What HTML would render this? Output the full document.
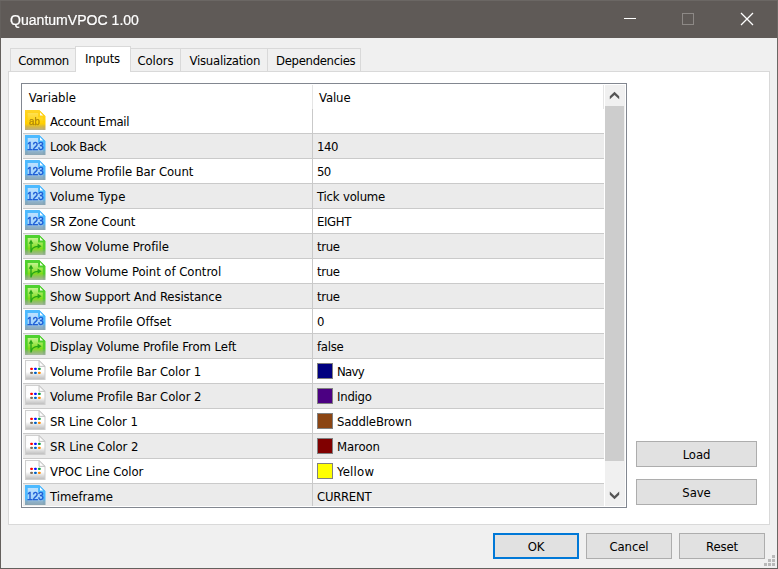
<!DOCTYPE html><html><head><meta charset="utf-8"><title>QuantumVPOC 1.00</title><style>
html,body{margin:0;padding:0}
body{width:778px;height:569px;overflow:hidden;background:#f0f0f0;position:relative;font-family:"DejaVu Sans Condensed","DejaVu Sans","Liberation Sans",sans-serif;font-size:13px;font-stretch:condensed;color:#000;letter-spacing:-0.1px}
div,span{box-sizing:border-box}
.abs{position:absolute}
#title{left:0;top:0;width:778px;height:38px;background:#5f5a57}
#title .cap{position:absolute;left:10px;top:10px;font-family:"Liberation Sans",sans-serif;font-size:15.5px;line-height:20px;color:#fff;letter-spacing:0;white-space:nowrap;display:inline-block;transform:scaleX(.907);transform-origin:0 0;-webkit-text-stroke:.22px #fff}
#bl{left:0;top:0;width:1px;height:569px;background:#64605d;z-index:9}
#br{left:777px;top:0;width:1px;height:569px;background:#6b6764;z-index:9}
#bb{left:0;top:568px;width:778px;height:1px;background:#64605d;z-index:9}
#bt{left:0;top:0;width:778px;height:1px;background:#6b6764;z-index:9}
.tab{position:absolute;top:48px;height:24px;border:1px solid #d9d9d9;border-bottom:none;background:#f0f0f0;text-align:center;line-height:23px;white-space:nowrap}
.tab.sel{top:46px;height:26px;background:#fff;line-height:23px;z-index:3}
#panel{left:8px;top:71px;width:762px;height:454px;background:#fff;border:1px solid #d9d9d9;z-index:1}
#list{left:21px;top:83px;width:606px;height:425px;border:1px solid #828790;background:#fff;z-index:2;overflow:hidden}
.row{position:absolute;left:1px;width:581px;height:25px;border-bottom:1px solid #cacaca;white-space:nowrap}
.row.g{background:#ebebeb}
.row .ic{position:absolute;left:2px;top:1px}
.row .n{position:absolute;left:27px;top:1px;line-height:24px}
.row .v{position:absolute;left:294px;top:1px;line-height:24px}
.row .sw{position:absolute;left:294px;top:4px;width:16px;height:16px;border:1px solid #808080}
.row .v.c{left:314px}
#coldiv{left:290px;top:25px;width:1px;height:400px;background:#c9c9c9;z-index:3}
.hd{position:absolute;top:2px;line-height:24px}
.btn{position:absolute;height:26px;border:1px solid #adadad;background:#e1e1e1;text-align:center;line-height:25px;z-index:2}
.btn.def{border:2px solid #0078d7;line-height:23px}
</style></head><body>
<div id="title" class="abs"><span class="cap">QuantumVPOC 1.00</span><svg class="abs" style="left:618px;top:8px" width="150" height="24" viewBox="0 0 150 24"><path d="M6 10.5 H18" stroke="#fff" stroke-width="1"/><rect x="64.5" y="5.5" width="11" height="11" fill="none" stroke="#8d8986" stroke-width="1"/><path d="M123 5 L135 17 M135 5 L123 17" stroke="#fff" stroke-width="1.3"/></svg></div>
<div id="bl" class="abs"></div><div id="br" class="abs"></div><div id="bb" class="abs"></div><div id="bt" class="abs"></div>
<div class="tab" style="left:10px;width:66px"><span style="position:relative;left:0.5px;letter-spacing:-0.36px">Common</span></div>
<div class="tab sel" style="left:75px;width:56px"><span style="position:relative;left:-0.5px;letter-spacing:-0.26px">Inputs</span></div>
<div class="tab" style="left:130px;width:51px"><span style="position:relative;left:0px;letter-spacing:-0.1px">Colors</span></div>
<div class="tab" style="left:180px;width:88px"><span style="position:relative;left:0.8px;letter-spacing:-0.25px">Visualization</span></div>
<div class="tab" style="left:267px;width:94px"><span style="position:relative;left:1.7px;letter-spacing:-0.34px">Dependencies</span></div>
<div id="panel" class="abs"></div>
<div id="list" class="abs">
<span class="hd" style="left:6.7px;letter-spacing:0">Variable</span><span class="hd" style="left:297px">Value</span>
<div class="abs" style="left:290px;top:1px;width:1px;height:24px;background:#e5e5e5"></div>
<div class="abs" style="left:581px;top:1px;width:1px;height:24px;background:#e5e5e5"></div>
<div class="row" style="top:25px"><svg class="ic" width="21" height="20" viewBox="0 0 21 20"><defs><filter id="b0" x="-10%" y="-10%" width="120%" height="120%"><feGaussianBlur stdDeviation="0.45"/></filter><linearGradient id="g0" x1="0" y1="0" x2="0" y2="1"><stop offset="0" stop-color="#ffd426"/><stop offset=".68" stop-color="#ffcf00"/><stop offset=".82" stop-color="#d6b640"/><stop offset="1" stop-color="#b9ab82"/></linearGradient><linearGradient id="i0" x1="0" y1="0" x2="0" y2="1"><stop offset="0" stop-color="#ffe052"/><stop offset=".62" stop-color="#ffd000"/><stop offset=".8" stop-color="#d8b93e"/><stop offset="1" stop-color="#bdb088"/></linearGradient></defs><g filter="url(#b0)"><path d="M0 0 H14.2 L20.5 6.2 V20 H0 Z" fill="url(#g0)"/><path d="M2.7 3 H13 V7.6 H17.8 V20 H2.7 Z" fill="url(#i0)"/><path d="M14.2 0 V6.2 H20.5 Z" fill="#ffd21a"/><path d="M15 2.2 V5.4 H18.2 Z" fill="#fffdf0"/></g><text x="9.4" y="15" font-family="Liberation Sans, sans-serif" font-size="10.5" text-anchor="middle" textLength="10.6" lengthAdjust="spacingAndGlyphs" fill="#ae860a" stroke="#ae860a" stroke-width=".25" filter="url(#b0)">ab</text></svg><span class="n" style="letter-spacing:-0.32px">Account Email</span><span class="v" style="letter-spacing:-0.1px"></span></div>
<div class="row g" style="top:50px"><svg class="ic" width="21" height="20" viewBox="0 0 21 20"><defs><filter id="b1" x="-10%" y="-10%" width="120%" height="120%"><feGaussianBlur stdDeviation="0.45"/></filter><linearGradient id="g1" x1="0" y1="0" x2="0" y2="1"><stop offset="0" stop-color="#4dbaff"/><stop offset=".68" stop-color="#50b8fd"/><stop offset=".82" stop-color="#7fabc6"/><stop offset="1" stop-color="#8aa3b0"/></linearGradient><linearGradient id="i1" x1="0" y1="0" x2="0" y2="1"><stop offset="0" stop-color="#bde1ff"/><stop offset=".62" stop-color="#a2d3fb"/><stop offset=".8" stop-color="#8fb2cb"/><stop offset="1" stop-color="#8ba5b3"/></linearGradient></defs><g filter="url(#b1)"><path d="M0 0 H14.2 L20.5 6.2 V20 H0 Z" fill="url(#g1)"/><path d="M2.7 3 H13 V7.6 H17.8 V20 H2.7 Z" fill="url(#i1)"/><path d="M14.2 0 V6.2 H20.5 Z" fill="#46b6ff"/><path d="M15 2.2 V5.4 H18.2 Z" fill="#ffffff"/></g><text x="10.3" y="15" font-family="Liberation Sans, sans-serif" font-size="11.6" text-anchor="middle" textLength="16.8" lengthAdjust="spacingAndGlyphs" fill="#1a5ad4" stroke="#1a5ad4" stroke-width=".45" filter="url(#b1)">123</text></svg><span class="n" style="letter-spacing:-0.36px">Look Back</span><span class="v" style="letter-spacing:-0.45px">140</span></div>
<div class="row" style="top:75px"><svg class="ic" width="21" height="20" viewBox="0 0 21 20"><defs><filter id="b2" x="-10%" y="-10%" width="120%" height="120%"><feGaussianBlur stdDeviation="0.45"/></filter><linearGradient id="g2" x1="0" y1="0" x2="0" y2="1"><stop offset="0" stop-color="#4dbaff"/><stop offset=".68" stop-color="#50b8fd"/><stop offset=".82" stop-color="#7fabc6"/><stop offset="1" stop-color="#8aa3b0"/></linearGradient><linearGradient id="i2" x1="0" y1="0" x2="0" y2="1"><stop offset="0" stop-color="#bde1ff"/><stop offset=".62" stop-color="#a2d3fb"/><stop offset=".8" stop-color="#8fb2cb"/><stop offset="1" stop-color="#8ba5b3"/></linearGradient></defs><g filter="url(#b2)"><path d="M0 0 H14.2 L20.5 6.2 V20 H0 Z" fill="url(#g2)"/><path d="M2.7 3 H13 V7.6 H17.8 V20 H2.7 Z" fill="url(#i2)"/><path d="M14.2 0 V6.2 H20.5 Z" fill="#46b6ff"/><path d="M15 2.2 V5.4 H18.2 Z" fill="#ffffff"/></g><text x="10.3" y="15" font-family="Liberation Sans, sans-serif" font-size="11.6" text-anchor="middle" textLength="16.8" lengthAdjust="spacingAndGlyphs" fill="#1a5ad4" stroke="#1a5ad4" stroke-width=".45" filter="url(#b2)">123</text></svg><span class="n" style="letter-spacing:-0.1px">Volume Profile Bar Count</span><span class="v" style="letter-spacing:-0.6px">50</span></div>
<div class="row g" style="top:100px"><svg class="ic" width="21" height="20" viewBox="0 0 21 20"><defs><filter id="b3" x="-10%" y="-10%" width="120%" height="120%"><feGaussianBlur stdDeviation="0.45"/></filter><linearGradient id="g3" x1="0" y1="0" x2="0" y2="1"><stop offset="0" stop-color="#4dbaff"/><stop offset=".68" stop-color="#50b8fd"/><stop offset=".82" stop-color="#7fabc6"/><stop offset="1" stop-color="#8aa3b0"/></linearGradient><linearGradient id="i3" x1="0" y1="0" x2="0" y2="1"><stop offset="0" stop-color="#bde1ff"/><stop offset=".62" stop-color="#a2d3fb"/><stop offset=".8" stop-color="#8fb2cb"/><stop offset="1" stop-color="#8ba5b3"/></linearGradient></defs><g filter="url(#b3)"><path d="M0 0 H14.2 L20.5 6.2 V20 H0 Z" fill="url(#g3)"/><path d="M2.7 3 H13 V7.6 H17.8 V20 H2.7 Z" fill="url(#i3)"/><path d="M14.2 0 V6.2 H20.5 Z" fill="#46b6ff"/><path d="M15 2.2 V5.4 H18.2 Z" fill="#ffffff"/></g><text x="10.3" y="15" font-family="Liberation Sans, sans-serif" font-size="11.6" text-anchor="middle" textLength="16.8" lengthAdjust="spacingAndGlyphs" fill="#1a5ad4" stroke="#1a5ad4" stroke-width=".45" filter="url(#b3)">123</text></svg><span class="n" style="letter-spacing:0.16px">Volume Type</span><span class="v" style="letter-spacing:-0.2px">Tick volume</span></div>
<div class="row" style="top:125px"><svg class="ic" width="21" height="20" viewBox="0 0 21 20"><defs><filter id="b4" x="-10%" y="-10%" width="120%" height="120%"><feGaussianBlur stdDeviation="0.45"/></filter><linearGradient id="g4" x1="0" y1="0" x2="0" y2="1"><stop offset="0" stop-color="#4dbaff"/><stop offset=".68" stop-color="#50b8fd"/><stop offset=".82" stop-color="#7fabc6"/><stop offset="1" stop-color="#8aa3b0"/></linearGradient><linearGradient id="i4" x1="0" y1="0" x2="0" y2="1"><stop offset="0" stop-color="#bde1ff"/><stop offset=".62" stop-color="#a2d3fb"/><stop offset=".8" stop-color="#8fb2cb"/><stop offset="1" stop-color="#8ba5b3"/></linearGradient></defs><g filter="url(#b4)"><path d="M0 0 H14.2 L20.5 6.2 V20 H0 Z" fill="url(#g4)"/><path d="M2.7 3 H13 V7.6 H17.8 V20 H2.7 Z" fill="url(#i4)"/><path d="M14.2 0 V6.2 H20.5 Z" fill="#46b6ff"/><path d="M15 2.2 V5.4 H18.2 Z" fill="#ffffff"/></g><text x="10.3" y="15" font-family="Liberation Sans, sans-serif" font-size="11.6" text-anchor="middle" textLength="16.8" lengthAdjust="spacingAndGlyphs" fill="#1a5ad4" stroke="#1a5ad4" stroke-width=".45" filter="url(#b4)">123</text></svg><span class="n" style="letter-spacing:-0.17px">SR Zone Count</span><span class="v" style="letter-spacing:-0.36px">EIGHT</span></div>
<div class="row g" style="top:150px"><svg class="ic" width="21" height="20" viewBox="0 0 21 20"><defs><filter id="b5" x="-10%" y="-10%" width="120%" height="120%"><feGaussianBlur stdDeviation="0.45"/></filter><linearGradient id="g5" x1="0" y1="0" x2="0" y2="1"><stop offset="0" stop-color="#50d230"/><stop offset=".68" stop-color="#52d028"/><stop offset=".82" stop-color="#7cb465"/><stop offset="1" stop-color="#9db09a"/></linearGradient><linearGradient id="i5" x1="0" y1="0" x2="0" y2="1"><stop offset="0" stop-color="#c4f490"/><stop offset=".62" stop-color="#80dc1c"/><stop offset=".8" stop-color="#8fc060"/><stop offset="1" stop-color="#a4b8a0"/></linearGradient></defs><g filter="url(#b5)"><path d="M0 0 H14.2 L20.5 6.2 V20 H0 Z" fill="url(#g5)"/><path d="M2.7 3 H13 V7.6 H17.8 V20 H2.7 Z" fill="url(#i5)"/><path d="M14.2 0 V6.2 H20.5 Z" fill="#48cc28"/><path d="M15 2.2 V5.4 H18.2 Z" fill="#f4ffe8"/></g><g filter="url(#b5)"><path d="M6 17.6 V8 M6.2 16.6 C6.6 13.4 8.6 11.5 13 11.3" stroke="#27a418" stroke-width="1.35" fill="none"/><path d="M3.7 8.7 L6 4.6 L8.3 8.7 Z M12.6 8.6 L16.6 11.2 L12.6 13.8 Z" fill="#27a418"/></g></svg><span class="n" style="letter-spacing:0.02px">Show Volume Profile</span><span class="v" style="letter-spacing:-0.33px">true</span></div>
<div class="row" style="top:175px"><svg class="ic" width="21" height="20" viewBox="0 0 21 20"><defs><filter id="b6" x="-10%" y="-10%" width="120%" height="120%"><feGaussianBlur stdDeviation="0.45"/></filter><linearGradient id="g6" x1="0" y1="0" x2="0" y2="1"><stop offset="0" stop-color="#50d230"/><stop offset=".68" stop-color="#52d028"/><stop offset=".82" stop-color="#7cb465"/><stop offset="1" stop-color="#9db09a"/></linearGradient><linearGradient id="i6" x1="0" y1="0" x2="0" y2="1"><stop offset="0" stop-color="#c4f490"/><stop offset=".62" stop-color="#80dc1c"/><stop offset=".8" stop-color="#8fc060"/><stop offset="1" stop-color="#a4b8a0"/></linearGradient></defs><g filter="url(#b6)"><path d="M0 0 H14.2 L20.5 6.2 V20 H0 Z" fill="url(#g6)"/><path d="M2.7 3 H13 V7.6 H17.8 V20 H2.7 Z" fill="url(#i6)"/><path d="M14.2 0 V6.2 H20.5 Z" fill="#48cc28"/><path d="M15 2.2 V5.4 H18.2 Z" fill="#f4ffe8"/></g><g filter="url(#b6)"><path d="M6 17.6 V8 M6.2 16.6 C6.6 13.4 8.6 11.5 13 11.3" stroke="#27a418" stroke-width="1.35" fill="none"/><path d="M3.7 8.7 L6 4.6 L8.3 8.7 Z M12.6 8.6 L16.6 11.2 L12.6 13.8 Z" fill="#27a418"/></g></svg><span class="n" style="letter-spacing:-0.04px">Show Volume Point of Control</span><span class="v" style="letter-spacing:-0.33px">true</span></div>
<div class="row g" style="top:200px"><svg class="ic" width="21" height="20" viewBox="0 0 21 20"><defs><filter id="b7" x="-10%" y="-10%" width="120%" height="120%"><feGaussianBlur stdDeviation="0.45"/></filter><linearGradient id="g7" x1="0" y1="0" x2="0" y2="1"><stop offset="0" stop-color="#50d230"/><stop offset=".68" stop-color="#52d028"/><stop offset=".82" stop-color="#7cb465"/><stop offset="1" stop-color="#9db09a"/></linearGradient><linearGradient id="i7" x1="0" y1="0" x2="0" y2="1"><stop offset="0" stop-color="#c4f490"/><stop offset=".62" stop-color="#80dc1c"/><stop offset=".8" stop-color="#8fc060"/><stop offset="1" stop-color="#a4b8a0"/></linearGradient></defs><g filter="url(#b7)"><path d="M0 0 H14.2 L20.5 6.2 V20 H0 Z" fill="url(#g7)"/><path d="M2.7 3 H13 V7.6 H17.8 V20 H2.7 Z" fill="url(#i7)"/><path d="M14.2 0 V6.2 H20.5 Z" fill="#48cc28"/><path d="M15 2.2 V5.4 H18.2 Z" fill="#f4ffe8"/></g><g filter="url(#b7)"><path d="M6 17.6 V8 M6.2 16.6 C6.6 13.4 8.6 11.5 13 11.3" stroke="#27a418" stroke-width="1.35" fill="none"/><path d="M3.7 8.7 L6 4.6 L8.3 8.7 Z M12.6 8.6 L16.6 11.2 L12.6 13.8 Z" fill="#27a418"/></g></svg><span class="n" style="letter-spacing:-0.11px">Show Support And Resistance</span><span class="v" style="letter-spacing:-0.33px">true</span></div>
<div class="row" style="top:225px"><svg class="ic" width="21" height="20" viewBox="0 0 21 20"><defs><filter id="b8" x="-10%" y="-10%" width="120%" height="120%"><feGaussianBlur stdDeviation="0.45"/></filter><linearGradient id="g8" x1="0" y1="0" x2="0" y2="1"><stop offset="0" stop-color="#4dbaff"/><stop offset=".68" stop-color="#50b8fd"/><stop offset=".82" stop-color="#7fabc6"/><stop offset="1" stop-color="#8aa3b0"/></linearGradient><linearGradient id="i8" x1="0" y1="0" x2="0" y2="1"><stop offset="0" stop-color="#bde1ff"/><stop offset=".62" stop-color="#a2d3fb"/><stop offset=".8" stop-color="#8fb2cb"/><stop offset="1" stop-color="#8ba5b3"/></linearGradient></defs><g filter="url(#b8)"><path d="M0 0 H14.2 L20.5 6.2 V20 H0 Z" fill="url(#g8)"/><path d="M2.7 3 H13 V7.6 H17.8 V20 H2.7 Z" fill="url(#i8)"/><path d="M14.2 0 V6.2 H20.5 Z" fill="#46b6ff"/><path d="M15 2.2 V5.4 H18.2 Z" fill="#ffffff"/></g><text x="10.3" y="15" font-family="Liberation Sans, sans-serif" font-size="11.6" text-anchor="middle" textLength="16.8" lengthAdjust="spacingAndGlyphs" fill="#1a5ad4" stroke="#1a5ad4" stroke-width=".45" filter="url(#b8)">123</text></svg><span class="n" style="letter-spacing:-0.06px">Volume Profile Offset</span><span class="v" style="letter-spacing:-0.1px">0</span></div>
<div class="row g" style="top:250px"><svg class="ic" width="21" height="20" viewBox="0 0 21 20"><defs><filter id="b9" x="-10%" y="-10%" width="120%" height="120%"><feGaussianBlur stdDeviation="0.45"/></filter><linearGradient id="g9" x1="0" y1="0" x2="0" y2="1"><stop offset="0" stop-color="#50d230"/><stop offset=".68" stop-color="#52d028"/><stop offset=".82" stop-color="#7cb465"/><stop offset="1" stop-color="#9db09a"/></linearGradient><linearGradient id="i9" x1="0" y1="0" x2="0" y2="1"><stop offset="0" stop-color="#c4f490"/><stop offset=".62" stop-color="#80dc1c"/><stop offset=".8" stop-color="#8fc060"/><stop offset="1" stop-color="#a4b8a0"/></linearGradient></defs><g filter="url(#b9)"><path d="M0 0 H14.2 L20.5 6.2 V20 H0 Z" fill="url(#g9)"/><path d="M2.7 3 H13 V7.6 H17.8 V20 H2.7 Z" fill="url(#i9)"/><path d="M14.2 0 V6.2 H20.5 Z" fill="#48cc28"/><path d="M15 2.2 V5.4 H18.2 Z" fill="#f4ffe8"/></g><g filter="url(#b9)"><path d="M6 17.6 V8 M6.2 16.6 C6.6 13.4 8.6 11.5 13 11.3" stroke="#27a418" stroke-width="1.35" fill="none"/><path d="M3.7 8.7 L6 4.6 L8.3 8.7 Z M12.6 8.6 L16.6 11.2 L12.6 13.8 Z" fill="#27a418"/></g></svg><span class="n" style="letter-spacing:-0.07px">Display Volume Profile From Left</span><span class="v" style="letter-spacing:-0.28px">false</span></div>
<div class="row" style="top:275px"><svg class="ic" width="21" height="20" viewBox="0 0 21 20"><defs><filter id="b10" x="-10%" y="-10%" width="120%" height="120%"><feGaussianBlur stdDeviation="0.45"/></filter><linearGradient id="g10" x1="0" y1="0" x2="0" y2="1"><stop offset="0" stop-color="#fcfcfc"/><stop offset=".6" stop-color="#ffffff"/><stop offset=".76" stop-color="#e2e2e2"/><stop offset="1" stop-color="#bbbbbb"/></linearGradient></defs><g filter="url(#b10)"><path d="M0.5 0.5 H14 L20 6.4 V19.6 H0.5 Z" fill="url(#g10)" stroke="#cfcfcf" stroke-width="1.1"/><path d="M14 0.6 V6.4 H20 Z" fill="#f2f2f2" stroke="#c4c4c4" stroke-width="1"/><path d="M15 2.8 V5.4 H17.6 Z" fill="#ffffff"/><rect x="5.1" y="7.8" width="2.9" height="2.3" rx="1.1" fill="#ff0000"/><rect x="9.0" y="7.8" width="2.9" height="2.3" rx="1.1" fill="#0a0aff"/><rect x="12.9" y="7.8" width="2.9" height="2.3" rx="1.1" fill="#00983a"/><rect x="5.1" y="11.7" width="2.9" height="2.3" rx="1.1" fill="#7e6c58"/><rect x="9.0" y="11.7" width="2.9" height="2.3" rx="1.1" fill="#0064c4"/><rect x="12.9" y="11.7" width="2.9" height="2.3" rx="1.1" fill="#ff8a00"/></g></svg><span class="n" style="letter-spacing:-0.05px">Volume Profile Bar Color 1</span><span class="sw" style="background:#000080"></span><span class="v c" style="letter-spacing:-0.7px">Navy</span></div>
<div class="row g" style="top:300px"><svg class="ic" width="21" height="20" viewBox="0 0 21 20"><defs><filter id="b11" x="-10%" y="-10%" width="120%" height="120%"><feGaussianBlur stdDeviation="0.45"/></filter><linearGradient id="g11" x1="0" y1="0" x2="0" y2="1"><stop offset="0" stop-color="#fcfcfc"/><stop offset=".6" stop-color="#ffffff"/><stop offset=".76" stop-color="#e2e2e2"/><stop offset="1" stop-color="#bbbbbb"/></linearGradient></defs><g filter="url(#b11)"><path d="M0.5 0.5 H14 L20 6.4 V19.6 H0.5 Z" fill="url(#g11)" stroke="#cfcfcf" stroke-width="1.1"/><path d="M14 0.6 V6.4 H20 Z" fill="#f2f2f2" stroke="#c4c4c4" stroke-width="1"/><path d="M15 2.8 V5.4 H17.6 Z" fill="#ffffff"/><rect x="5.1" y="7.8" width="2.9" height="2.3" rx="1.1" fill="#ff0000"/><rect x="9.0" y="7.8" width="2.9" height="2.3" rx="1.1" fill="#0a0aff"/><rect x="12.9" y="7.8" width="2.9" height="2.3" rx="1.1" fill="#00983a"/><rect x="5.1" y="11.7" width="2.9" height="2.3" rx="1.1" fill="#7e6c58"/><rect x="9.0" y="11.7" width="2.9" height="2.3" rx="1.1" fill="#0064c4"/><rect x="12.9" y="11.7" width="2.9" height="2.3" rx="1.1" fill="#ff8a00"/></g></svg><span class="n" style="letter-spacing:-0.04px">Volume Profile Bar Color 2</span><span class="sw" style="background:#4b0082"></span><span class="v c" style="letter-spacing:-0.24px">Indigo</span></div>
<div class="row" style="top:325px"><svg class="ic" width="21" height="20" viewBox="0 0 21 20"><defs><filter id="b12" x="-10%" y="-10%" width="120%" height="120%"><feGaussianBlur stdDeviation="0.45"/></filter><linearGradient id="g12" x1="0" y1="0" x2="0" y2="1"><stop offset="0" stop-color="#fcfcfc"/><stop offset=".6" stop-color="#ffffff"/><stop offset=".76" stop-color="#e2e2e2"/><stop offset="1" stop-color="#bbbbbb"/></linearGradient></defs><g filter="url(#b12)"><path d="M0.5 0.5 H14 L20 6.4 V19.6 H0.5 Z" fill="url(#g12)" stroke="#cfcfcf" stroke-width="1.1"/><path d="M14 0.6 V6.4 H20 Z" fill="#f2f2f2" stroke="#c4c4c4" stroke-width="1"/><path d="M15 2.8 V5.4 H17.6 Z" fill="#ffffff"/><rect x="5.1" y="7.8" width="2.9" height="2.3" rx="1.1" fill="#ff0000"/><rect x="9.0" y="7.8" width="2.9" height="2.3" rx="1.1" fill="#0a0aff"/><rect x="12.9" y="7.8" width="2.9" height="2.3" rx="1.1" fill="#00983a"/><rect x="5.1" y="11.7" width="2.9" height="2.3" rx="1.1" fill="#7e6c58"/><rect x="9.0" y="11.7" width="2.9" height="2.3" rx="1.1" fill="#0064c4"/><rect x="12.9" y="11.7" width="2.9" height="2.3" rx="1.1" fill="#ff8a00"/></g></svg><span class="n" style="letter-spacing:-0.08px">SR Line Color 1</span><span class="sw" style="background:#8b4513"></span><span class="v c" style="letter-spacing:-0.17px">SaddleBrown</span></div>
<div class="row g" style="top:350px"><svg class="ic" width="21" height="20" viewBox="0 0 21 20"><defs><filter id="b13" x="-10%" y="-10%" width="120%" height="120%"><feGaussianBlur stdDeviation="0.45"/></filter><linearGradient id="g13" x1="0" y1="0" x2="0" y2="1"><stop offset="0" stop-color="#fcfcfc"/><stop offset=".6" stop-color="#ffffff"/><stop offset=".76" stop-color="#e2e2e2"/><stop offset="1" stop-color="#bbbbbb"/></linearGradient></defs><g filter="url(#b13)"><path d="M0.5 0.5 H14 L20 6.4 V19.6 H0.5 Z" fill="url(#g13)" stroke="#cfcfcf" stroke-width="1.1"/><path d="M14 0.6 V6.4 H20 Z" fill="#f2f2f2" stroke="#c4c4c4" stroke-width="1"/><path d="M15 2.8 V5.4 H17.6 Z" fill="#ffffff"/><rect x="5.1" y="7.8" width="2.9" height="2.3" rx="1.1" fill="#ff0000"/><rect x="9.0" y="7.8" width="2.9" height="2.3" rx="1.1" fill="#0a0aff"/><rect x="12.9" y="7.8" width="2.9" height="2.3" rx="1.1" fill="#00983a"/><rect x="5.1" y="11.7" width="2.9" height="2.3" rx="1.1" fill="#7e6c58"/><rect x="9.0" y="11.7" width="2.9" height="2.3" rx="1.1" fill="#0064c4"/><rect x="12.9" y="11.7" width="2.9" height="2.3" rx="1.1" fill="#ff8a00"/></g></svg><span class="n" style="letter-spacing:-0.04px">SR Line Color 2</span><span class="sw" style="background:#800000"></span><span class="v c" style="letter-spacing:-0.1px">Maroon</span></div>
<div class="row" style="top:375px"><svg class="ic" width="21" height="20" viewBox="0 0 21 20"><defs><filter id="b14" x="-10%" y="-10%" width="120%" height="120%"><feGaussianBlur stdDeviation="0.45"/></filter><linearGradient id="g14" x1="0" y1="0" x2="0" y2="1"><stop offset="0" stop-color="#fcfcfc"/><stop offset=".6" stop-color="#ffffff"/><stop offset=".76" stop-color="#e2e2e2"/><stop offset="1" stop-color="#bbbbbb"/></linearGradient></defs><g filter="url(#b14)"><path d="M0.5 0.5 H14 L20 6.4 V19.6 H0.5 Z" fill="url(#g14)" stroke="#cfcfcf" stroke-width="1.1"/><path d="M14 0.6 V6.4 H20 Z" fill="#f2f2f2" stroke="#c4c4c4" stroke-width="1"/><path d="M15 2.8 V5.4 H17.6 Z" fill="#ffffff"/><rect x="5.1" y="7.8" width="2.9" height="2.3" rx="1.1" fill="#ff0000"/><rect x="9.0" y="7.8" width="2.9" height="2.3" rx="1.1" fill="#0a0aff"/><rect x="12.9" y="7.8" width="2.9" height="2.3" rx="1.1" fill="#00983a"/><rect x="5.1" y="11.7" width="2.9" height="2.3" rx="1.1" fill="#7e6c58"/><rect x="9.0" y="11.7" width="2.9" height="2.3" rx="1.1" fill="#0064c4"/><rect x="12.9" y="11.7" width="2.9" height="2.3" rx="1.1" fill="#ff8a00"/></g></svg><span class="n" style="letter-spacing:-0.1px">VPOC Line Color</span><span class="sw" style="background:#ffff00"></span><span class="v c" style="letter-spacing:0.25px">Yellow</span></div>
<div class="row g" style="top:400px"><svg class="ic" width="21" height="20" viewBox="0 0 21 20"><defs><filter id="b15" x="-10%" y="-10%" width="120%" height="120%"><feGaussianBlur stdDeviation="0.45"/></filter><linearGradient id="g15" x1="0" y1="0" x2="0" y2="1"><stop offset="0" stop-color="#4dbaff"/><stop offset=".68" stop-color="#50b8fd"/><stop offset=".82" stop-color="#7fabc6"/><stop offset="1" stop-color="#8aa3b0"/></linearGradient><linearGradient id="i15" x1="0" y1="0" x2="0" y2="1"><stop offset="0" stop-color="#bde1ff"/><stop offset=".62" stop-color="#a2d3fb"/><stop offset=".8" stop-color="#8fb2cb"/><stop offset="1" stop-color="#8ba5b3"/></linearGradient></defs><g filter="url(#b15)"><path d="M0 0 H14.2 L20.5 6.2 V20 H0 Z" fill="url(#g15)"/><path d="M2.7 3 H13 V7.6 H17.8 V20 H2.7 Z" fill="url(#i15)"/><path d="M14.2 0 V6.2 H20.5 Z" fill="#46b6ff"/><path d="M15 2.2 V5.4 H18.2 Z" fill="#ffffff"/></g><text x="10.3" y="15" font-family="Liberation Sans, sans-serif" font-size="11.6" text-anchor="middle" textLength="16.8" lengthAdjust="spacingAndGlyphs" fill="#1a5ad4" stroke="#1a5ad4" stroke-width=".45" filter="url(#b15)">123</text></svg><span class="n" style="letter-spacing:-0.04px">Timeframe</span><span class="v" style="letter-spacing:-0.28px">CURRENT</span></div>
<div id="coldiv" class="abs"></div>
<div class="abs" style="left:583px;top:1px;width:20px;height:421px;background:#f0f0f0"></div>
<div class="abs" style="left:583px;top:22px;width:19px;height:355px;background:#cdcdcd"></div>
<svg class="abs" style="left:583px;top:1px" width="20" height="21" viewBox="0 0 20 21"><path d="M9.5 6.7 L14.2 11.2 V14.3 L9.5 9.9 L4.8 14.3 V11.2 Z" fill="#555"/></svg>
<svg class="abs" style="left:583px;top:401px" width="20" height="21" viewBox="0 0 20 21"><path d="M9.5 14.2 L14.2 9.7 V6.6 L9.5 11 L4.8 6.6 V9.7 Z" fill="#555"/></svg>
<div class="abs" style="left:0;top:422px;width:604px;height:1px;background:#fff;z-index:5"></div>
</div>
<div class="btn" style="left:636px;top:441px;width:121px">Load</div>
<div class="btn" style="left:636px;top:479px;width:121px">Save</div>
<div class="btn def" style="left:493px;top:533px;width:86px">OK</div>
<div class="btn" style="left:586px;top:533px;width:86px">Cancel</div>
<div class="btn" style="left:679px;top:533px;width:86px">Reset</div>
<svg class="abs" style="left:764px;top:555px" width="11" height="11" viewBox="0 0 11 11"><rect x="8" y="0" width="3" height="3" fill="#b9b9b9"/><rect x="4" y="4" width="3" height="3" fill="#b9b9b9"/><rect x="8" y="4" width="3" height="3" fill="#b9b9b9"/><rect x="0" y="8" width="3" height="3" fill="#b9b9b9"/><rect x="4" y="8" width="3" height="3" fill="#b9b9b9"/><rect x="8" y="8" width="3" height="3" fill="#b9b9b9"/></svg>
</body></html>
